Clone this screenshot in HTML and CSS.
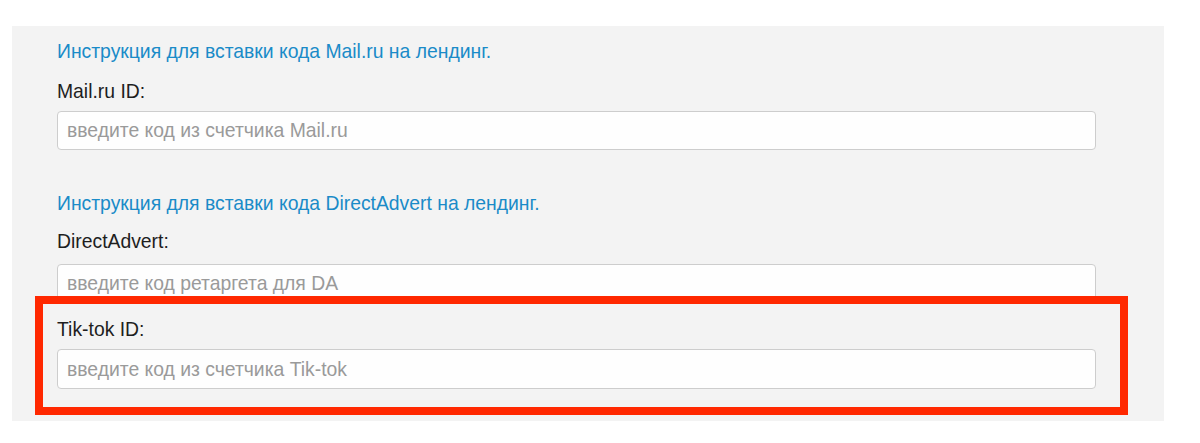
FILE: index.html
```html
<!DOCTYPE html>
<html lang="ru">
<head>
<meta charset="utf-8">
<link rel="stylesheet" href="styles.css">
</head>
<body>
<div class="panel">
  <a class="link" href="#">Инструкция для вставки кода Mail.ru на лендинг.</a>
  <div class="label">Mail.ru ID:</div>
  <input class="field" type="text" placeholder="введите код из счетчика Mail.ru">
  <a class="link link-2" href="#">Инструкция для вставки кода DirectAdvert на лендинг.</a>
  <div class="label">DirectAdvert:</div>
  <input class="field field-2" type="text" placeholder="введите код ретаргета для DA">
  <div class="highlight">
    <div class="label label-first">Tik-tok ID:</div>
    <input class="field" type="text" placeholder="введите код из счетчика Tik-tok">
  </div>
</div>
</body>
</html>
```
FILE: styles.css
```css
html, body {
  margin: 0;
  padding: 0;
  background: #ffffff;
}
body {
  font-family: "Liberation Sans", Arial, sans-serif;
  font-size: 19.35px;
  color: #1e1e1e;
}
.panel {
  margin: 26px 36px 0 12px;
  background: #f3f3f3;
  padding: 14px 68px 6px 45px;
  display: flex;
  flex-direction: column;
}
.link {
  display: block;
  line-height: 22px;
  color: #1a8bc8;
  text-decoration: none;
}
.link-2 {
  margin-top: 42px;
}
.label {
  margin-top: 18px;
  line-height: 22px;
}
.link-2 + .label {
  margin-top: 16px;
}
.label-first {
  margin-top: 0;
}
.field {
  box-sizing: border-box;
  margin: 9px 0 0;
  width: 100%;
  height: 39px;
  border: 1px solid #cdcdcd;
  border-radius: 4px;
  background: #fefefe;
  padding: 0 9px;
  font-family: "Liberation Sans", Arial, sans-serif;
  font-size: 19.35px;
  color: #333;
  outline: none;
}
.field::placeholder {
  color: #9a9a9a;
}
.field-2 {
  margin-top: 12px;
}
.highlight {
  position: relative;
  margin: -7px -32px 0 -22px;
  border: 8px solid #ff2800;
  background: #f3f3f3;
  padding: 14px 24px 18px 14px;
}
.highlight .field {
  margin-top: 9px;
  height: 40px;
}
```
